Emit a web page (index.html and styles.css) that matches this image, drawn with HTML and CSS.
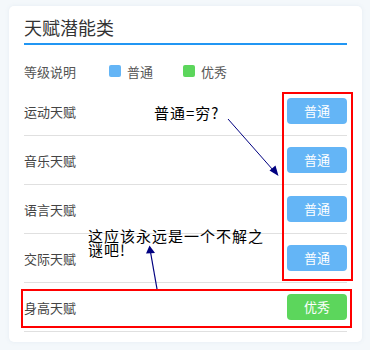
FILE: index.html
```html
<!DOCTYPE html>
<html>
<head>
    <title>天赋潜能类</title>
    <link rel="stylesheet" href="styles.css">
</head>
<body>
    <div class="card">
        <h1 class="title">天赋潜能类</h1>

        <div class="legend">
            <span class="legend-label">等级说明</span>
            <span class="legend-item"><i class="dot dot-normal"></i>普通</span>
            <span class="legend-item"><i class="dot dot-good"></i>优秀</span>
        </div>

        <div class="row">
            <span class="row-name">运动天赋</span>
            <span class="tag tag-normal">普通</span>
        </div>
        <div class="row">
            <span class="row-name">音乐天赋</span>
            <span class="tag tag-normal">普通</span>
        </div>
        <div class="row">
            <span class="row-name">语言天赋</span>
            <span class="tag tag-normal">普通</span>
        </div>
        <div class="row">
            <span class="row-name">交际天赋</span>
            <span class="tag tag-normal">普通</span>
        </div>
        <div class="row">
            <span class="row-name">身高天赋</span>
            <span class="tag tag-good">优秀</span>
        </div>
    </div>

    <!-- annotations drawn over the screenshot -->
    <div class="mark mark-tags"></div>
    <div class="mark mark-height"></div>
    <div class="note note-poor">普通=穷?</div>
    <div class="note note-mystery">这应该永远是一个不解之谜吧!</div>
    <svg class="arrows" width="370" height="350" viewBox="0 0 370 350">
        <line x1="228" y1="119" x2="273" y2="170" stroke="#000080" stroke-width="1" />
        <polygon points="278.5,176 269.5,170.5 275.5,165.5" fill="#000080" />
        <line x1="157" y1="289" x2="150.5" y2="252" stroke="#000080" stroke-width="1.2" />
        <polygon points="149.5,245.5 146,253.5 155,253" fill="#000080" />
    </svg>
</body>
</html>
```

FILE: styles.css
```css
body {
    margin: 0;
    padding: 6px 8px 8px 9px;
    background-color: #f4f8fb;
    font-family: "Noto Sans CJK SC", "Liberation Sans", sans-serif;
    color: #444;
    position: relative;
    width: 353px;
}

.card {
    background-color: #fff;
    border-radius: 5px;
    box-shadow: 0 0 4px rgba(120, 150, 180, 0.12);
    padding: 5px 15px 10px 15px;
}

.title {
    margin: 0;
    font-size: 18px;
    font-weight: normal;
    line-height: 32px;
    color: #333;
    border-bottom: 2px solid #2196f3;
}

.legend {
    display: flex;
    align-items: center;
    padding: 14px 0 4px 0;
    height: 24px;
    font-size: 13px;
    color: #555;
}

.legend-label {
    width: 85px;
}

.legend-item {
    display: flex;
    align-items: center;
    width: 74px;
}

.dot {
    display: inline-block;
    width: 12px;
    height: 12px;
    border-radius: 2px;
    margin-right: 6px;
}

.dot-normal {
    background-color: #64b5f6;
}

.dot-good {
    background-color: #5cd65c;
}

.row {
    display: flex;
    align-items: center;
    justify-content: space-between;
    height: 48px;
    border-bottom: 1px solid #e0e0e0;
    font-size: 13px;
}

.row-name {
    color: #444;
}

.tag {
    width: 60px;
    height: 26px;
    line-height: 26px;
    border-radius: 4px;
    text-align: center;
    color: #fff;
    font-size: 13px;
}

.tag-normal {
    background-color: #64b5f6;
}

.tag-good {
    background-color: #5cd65c;
}

.mark {
    position: absolute;
    border: 2px solid #ff0000;
    box-sizing: border-box;
}

.mark-tags {
    left: 282px;
    top: 92px;
    width: 71px;
    height: 189px;
}

.mark-height {
    left: 21px;
    top: 289px;
    width: 331px;
    height: 39px;
}

.note {
    position: absolute;
    color: #000;
    font-size: 15px;
    letter-spacing: 1px;
    font-family: "Noto Sans CJK SC", sans-serif;
}

.note-poor {
    left: 154px;
    top: 101px;
    line-height: 24px;
}

.note-mystery {
    left: 88px;
    top: 229px;
    width: 180px;
    line-height: 14px;
}

.arrows {
    position: absolute;
    left: 0;
    top: 0;
    pointer-events: none;
}
```
